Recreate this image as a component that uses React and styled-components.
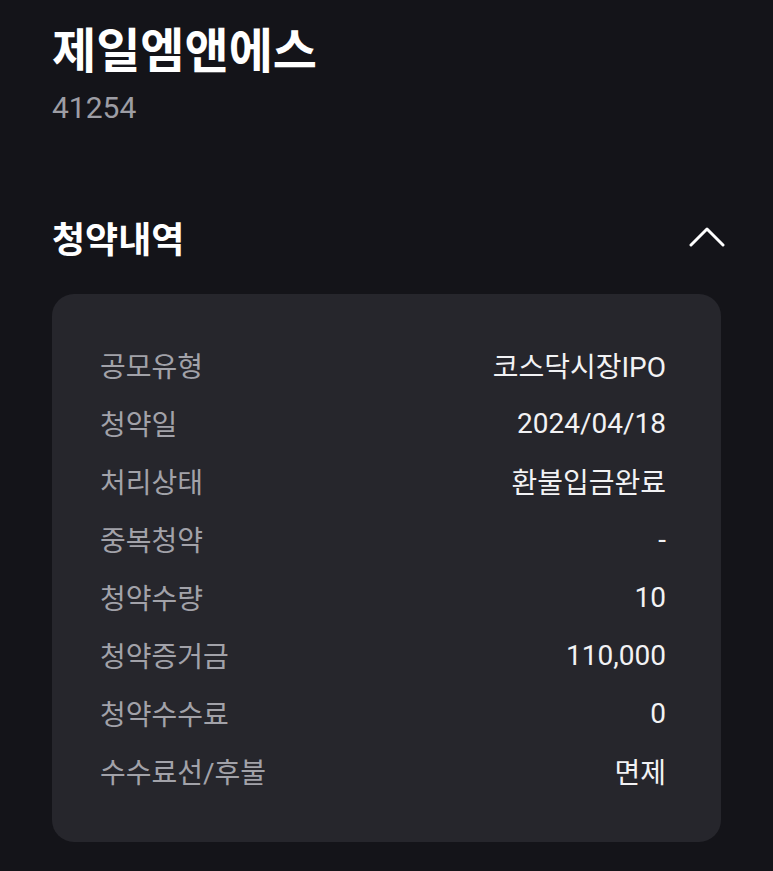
import React from 'react';
import styled, { createGlobalStyle } from 'styled-components';

const GlobalStyle = createGlobalStyle`
  body {
    margin: 0;
    padding: 0;
    background: #141419;
    font-family: Roboto, 'Noto Sans CJK KR', sans-serif;
    color: #f2f2f4;
  }
  *, *::before, *::after {
    box-sizing: border-box;
  }
`;

const Page = styled.div`
  min-height: 100vh;
  background: #141419;
  padding: 18px 52px 0 52px;
`;

const Title = styled.h1`
  margin: 0;
  font-family: 'Noto Sans CJK KR', sans-serif;
  font-size: 48px;
  line-height: 58px;
  font-weight: 700;
  color: #ffffff;
`;

const Code = styled.div`
  margin-top: 14px;
  font-size: 30px;
  line-height: 36px;
  color: #9d9da4;
`;

const SectionHeader = styled.div`
  margin-top: 89px;
  height: 44px;
  display: flex;
  align-items: center;
  justify-content: space-between;
`;

const SectionTitle = styled.h2`
  margin: 0;
  font-family: 'Noto Sans CJK KR', sans-serif;
  font-size: 36px;
  line-height: 44px;
  font-weight: 700;
  color: #ffffff;
`;

const ToggleButton = styled.button`
  background: none;
  border: none;
  padding: 0;
  margin-right: -4px;
  display: flex;
  cursor: pointer;
`;

const Card = styled.div`
  margin-top: 35px;
  background: #26262c;
  border-radius: 22px;
  padding: 42px 55px 42px 48px;
  display: flex;
  flex-direction: column;
`;

const Row = styled.div`
  height: 58px;
  display: flex;
  align-items: center;
  justify-content: space-between;
  font-size: 28px;
`;

const Label = styled.span`
  color: #a2a2a9;
`;

const Value = styled.span`
  color: #f2f2f4;
`;

const rows = [
  ['공모유형', '코스닥시장IPO'],
  ['청약일', '2024/04/18'],
  ['처리상태', '환불입금완료'],
  ['중복청약', '-'],
  ['청약수량', '10'],
  ['청약증거금', '110,000'],
  ['청약수수료', '0'],
  ['수수료선/후불', '면제'],
];

const App = () => (
  <>
    <GlobalStyle />
    <Page>
      <Title>제일엠앤에스</Title>
      <Code>41254</Code>
      <SectionHeader>
        <SectionTitle>청약내역</SectionTitle>
        <ToggleButton aria-label="접기">
          <svg width="36" height="22" viewBox="0 0 36 22" fill="none">
            <path d="M2 19 L18 3 L34 19" stroke="#ffffff" strokeWidth="3" strokeLinecap="round" strokeLinejoin="round" />
          </svg>
        </ToggleButton>
      </SectionHeader>
      <Card>
        {rows.map(([label, value]) => (
          <Row key={label}>
            <Label>{label}</Label>
            <Value>{value}</Value>
          </Row>
        ))}
      </Card>
    </Page>
  </>
);

export default App;
